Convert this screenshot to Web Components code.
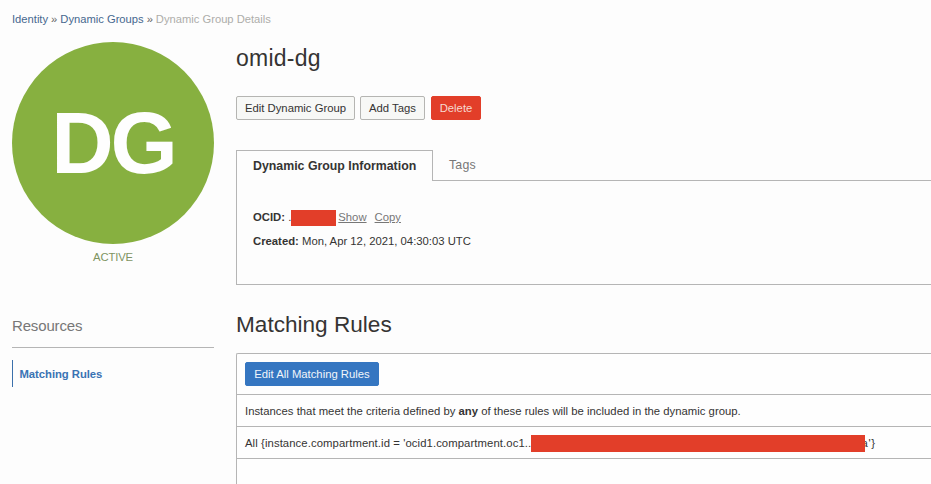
<!DOCTYPE html>
<html lang="en">
<head>
<meta charset="utf-8">
<title>Dynamic Group Details</title>
<style>
html,body{margin:0;height:484px;overflow:hidden;background:#fdfdfd}
body{font:11.3px/16px "Liberation Sans",Arial,sans-serif;color:#353433}
</style>
</head>
<body>
<dg-page></dg-page>
<script>
function define(name, html) {
  const t = document.createElement('template');
  t.innerHTML = html;
  customElements.define(name, class extends HTMLElement {
    constructor() {
      super();
      this.attachShadow({mode: 'open'}).appendChild(t.content.cloneNode(true));
    }
  });
}

define('dg-button', `<style>
:host{display:flex;box-sizing:border-box;height:24px;align-items:center;justify-content:center;border:1px solid #b5b5b2;border-radius:2px;background:#f7f8f6;color:#353433;white-space:nowrap}
:host([kind=danger]){background:#e23e29;border-color:#e23e29;color:#f6d9d0}
:host([kind=primary]){background:#3576c1;border-color:#3576c1;color:#f0f5fa}
</style><slot></slot>`);

define('dg-redaction', `<style>
:host{display:block;flex:none;background:#e23e29}
</style>`);

define('dg-breadcrumbs', `<style>
:host{display:flex;gap:3px;padding:11px 0 0 12px;height:16px;font-size:11.2px;white-space:nowrap;color:#666}
a{color:#46688f}
.last{color:#adadaa}
</style><a>Identity</a><span>»</span><a>Dynamic Groups</a><span>»</span><span class="last">Dynamic Group Details</span>`);

define('dg-sidebar', `<style>
:host{display:block;width:202px}
.disc{width:202px;height:202px;border-radius:50%;background:#87b040;color:#fefefe;display:flex;align-items:center;justify-content:center;font-weight:bold;font-size:86.5px;line-height:202px;letter-spacing:-3px}
.state{text-align:center;color:#7f9461;margin-top:5px;letter-spacing:-.15px}
.heading{margin-top:51px;padding-bottom:11px;height:20px;line-height:20px;font-size:15px;letter-spacing:-.15px;color:#777;border-bottom:1px solid #b5b5b5}
.item{margin-top:12px;height:27px;line-height:28px;box-sizing:border-box;border-left:1px solid #3b70ab;padding-left:6.5px;font-weight:bold;color:#3a73b4;letter-spacing:-.05px}
</style>
<div class="disc"><span>DG</span></div>
<div class="state"><span>ACTIVE</span></div>
<div class="heading"><span>Resources</span></div>
<div class="item"><span>Matching Rules</span></div>`);

define('dg-tabs', `<style>
:host{display:block;height:135px;box-sizing:border-box;border-bottom:1px solid #b5b5b5;border-left:1px solid #b5b5b5}
.bar{display:flex;height:31px;font-size:12.35px}
.on{box-sizing:border-box;width:196px;border-top:1px solid #b5b5b5;border-right:1px solid #b5b5b5;padding-left:16px;line-height:30px;font-weight:bold}
.off{box-sizing:border-box;flex:1;border-bottom:1px solid #b5b5b5;padding-left:16px;line-height:30px;color:#777;letter-spacing:.2px}
</style>
<div class="bar"><div class="on"><span>Dynamic Group Information</span></div><div class="off"><span>Tags</span></div></div>
<slot></slot>`);

define('dg-info', `<style>
:host{display:block;padding:24px 0 0 16px;white-space:nowrap}
div{display:flex;height:24px;line-height:24px}
dg-redaction{width:45px;height:16px;margin-top:5px}
a{color:#777;text-decoration:underline}
.show{margin-left:2px}.copy{margin-left:8px}
</style>
<div><b>OCID:</b><span>&nbsp;.</span><dg-redaction></dg-redaction><a class="show">Show</a><a class="copy">Copy</a></div>
<div><b>Created:</b><span>&nbsp;Mon, Apr 12, 2021, 04:30:03 UTC</span></div>`);

define('dg-rules', `<style>
:host{display:block;height:131px;border:1px solid #b5b5b5;border-width:1px 0 0 1px;border-top-left-radius:2px;background:#fefefe;white-space:nowrap}
div{display:flex;align-items:center;padding-left:8px;height:31px;border-bottom:1px solid #b5b5b5}
.actions{height:40px}
dg-button{width:134px}
dg-redaction{width:334px;height:17px;margin-top:1px;z-index:1}
.summary{letter-spacing:.015px}
.rule{letter-spacing:.09px;width:286px}
.tail{margin-left:-3.5px;letter-spacing:.6px}
</style>
<div class="actions"><dg-button kind="primary"><span>Edit All Matching Rules</span></dg-button></div>
<div><span class="summary">Instances that meet the criteria defined by <b>any</b> of these rules will be included in the dynamic group.</span></div>
<div><span class="rule">All {instance.compartment.id = 'ocid1.compartment.oc1..</span><dg-redaction></dg-redaction><span class="tail">a'}</span></div>`);

define('dg-page', `<style>
:host{display:block;width:931px;height:484px;overflow:hidden}
.cols{display:grid;grid-template-columns:202px 1fr;column-gap:22px;padding:15px 0 0 12px}
h1,h2{margin:0;font-weight:normal;font-size:23px;line-height:32px;height:32px}
h1{letter-spacing:.25px}
.buttons{display:flex;margin-top:22px}
dg-tabs{margin-top:30px}
h2{margin-top:24px;font-size:22.6px}
dg-rules{margin-top:12px}
.b1{width:119px}.b2{width:65px;margin-left:5px}.b3{width:50px;margin-left:6px}
</style>
<dg-breadcrumbs></dg-breadcrumbs>
<div class="cols">
<dg-sidebar></dg-sidebar>
<main>
<h1><span>omid-dg</span></h1>
<div class="buttons"><dg-button class="b1"><span>Edit Dynamic Group</span></dg-button><dg-button class="b2"><span>Add Tags</span></dg-button><dg-button class="b3" kind="danger"><span>Delete</span></dg-button></div>
<dg-tabs><dg-info></dg-info></dg-tabs>
<h2><span>Matching Rules</span></h2>
<dg-rules></dg-rules>
</main>
</div>`);
</script>
</body>
</html>
